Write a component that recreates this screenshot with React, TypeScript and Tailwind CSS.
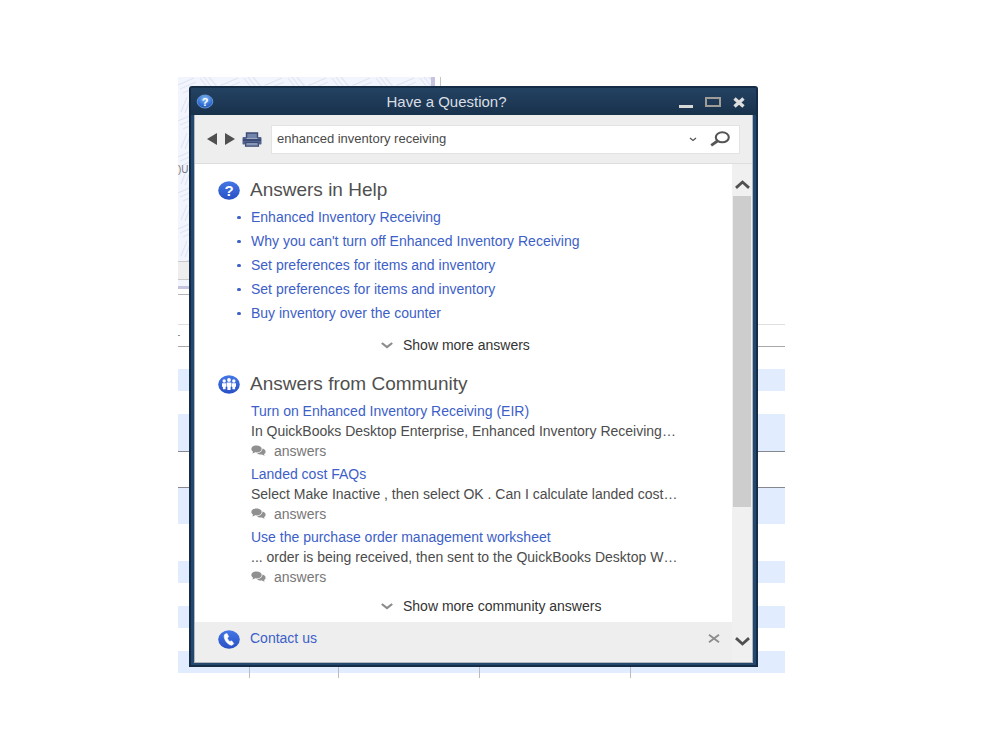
import React from "react";

const helpLinks = [
  "Enhanced Inventory Receiving",
  "Why you can't turn off Enhanced Inventory Receiving",
  "Set preferences for items and inventory",
  "Set preferences for items and inventory",
  "Buy inventory over the counter",
];

const communityPosts = [
  {
    title: "Turn on Enhanced Inventory Receiving (EIR)",
    excerpt: "In QuickBooks Desktop Enterprise, Enhanced Inventory Receiving…",
  },
  {
    title: "Landed cost FAQs",
    excerpt: "Select Make Inactive , then select OK . Can I calculate landed cost…",
  },
  {
    title: "Use the purchase order management worksheet",
    excerpt: "... order is being received, then sent to the QuickBooks Desktop W…",
  },
];

function Badge({ children }: { children: React.ReactNode }) {
  return (
    <svg className="h-5 w-[22px] shrink-0" viewBox="0 0 22 20" aria-hidden="true">
      <defs>
        <linearGradient id="badge" x1="0" y1="0" x2="0" y2="1">
          <stop offset="0" stopColor="#4377e6" />
          <stop offset="1" stopColor="#2850c4" />
        </linearGradient>
      </defs>
      <ellipse cx="11" cy="10.5" rx="10.8" ry="9.2" fill="url(#badge)" />
      {children}
    </svg>
  );
}

function Chevron({ className, d = "M.8 1 6 5.2 11.2 1" }: { className: string; d?: string }) {
  return (
    <svg className={className} viewBox="0 0 12 7" fill="none" stroke="currentColor" strokeWidth="2.200" aria-hidden="true">
      <path d={d} />
    </svg>
  );
}

function AnswersIcon() {
  return (
    <svg className="h-[11px] w-[15px]" viewBox="0 0 15 11" fill="#909090" aria-hidden="true">
      <path d="M5.5.5C2.5.5.3 2 .3 4c0 1.200.8 2.200 1.900 2.800L1.200 8.400c1.200 0 2.200-.4 2.900-1.100.5.1.9.1 1.400.1 3 0 5.200-1.500 5.200-3.500S8.500.5 5.500.5Z" />
      <path d="M11.500 3.600c0 2.600-2.400 4.400-5.500 4.600.8.9 2.200 1.400 3.700 1.400.5 0 .9 0 1.300-.1.700.7 1.700 1.100 2.800 1.100l-.9-1.500c1-.5 1.700-1.400 1.700-2.400 0-1.400-1.200-2.600-3.100-3.100Z" />
    </svg>
  );
}

function Stripe({ className }: { className: string }) {
  return <div className={"shrink-0 bg-[#e1edfe] " + className} />;
}

function Backdrop() {
  return (
    <div className="col-start-1 row-start-1 flex flex-col overflow-hidden" aria-hidden="true">
      <div className="flex h-[184px] shrink-0">
        <div className="relative w-[253px] bg-[#f2f5fd]">
          <svg className="absolute inset-0 h-full w-full" fill="none" stroke="#e0e5f2" strokeWidth="1.2">
            <defs>
              <pattern id="strokes" width="44" height="36" patternUnits="userSpaceOnUse">
                <path d="M0 8 16 1M2 12 18 5M5 16l15-7M22 1l10 13M26 0l10 13M31 0l9 11M3 35 9 20M7 36l6-15M12 36l5-14M20 22l19 6M20 27l18 6M22 32l12 4M38 16l6-9M41 19l3-5" />
              </pattern>
            </defs>
            <rect width="100%" height="100%" fill="url(#strokes)" stroke="none" />
          </svg>
          <div className="relative pt-[85px] text-[10px] leading-4 text-[#777777]">)U</div>
        </div>
        <div className="w-1 bg-[#c5c3df]" />
        <div className="ml-[5px] w-px bg-[#c4c4c4]" />
      </div>
      <div className="h-[19px] w-[262px] shrink-0 border-y border-[#c8c8c8] bg-[#eeeeee]" />
      <div className="h-[6px] w-[262px] shrink-0 bg-[#f2f5fd]" />
      <div className="h-[3px] w-[262px] shrink-0 bg-[#c5c3df]" />
      <div className="h-[6px] w-[262px] shrink-0 border-b border-[#b5b5b5]" />
      <div className="h-[29px] shrink-0" />
      <div className="h-[23px] shrink-0 border-b border-t border-b-[#a8a8a8] border-t-[#dedede] pt-[10px]">
        <div className="h-px w-0.5 bg-[#8896a4]" />
      </div>
      <div className="h-[22px] shrink-0" />
      <Stripe className="h-[22px]" />
      <div className="h-[23px] shrink-0" />
      <Stripe className="h-[38px] border-b border-[#85888e]" />
      <div className="h-9 shrink-0 border-b border-[#85888e]" />
      <Stripe className="h-9" />
      <div className="h-[37px] shrink-0" />
      <Stripe className="h-[22px]" />
      <div className="h-[23px] shrink-0" />
      <Stripe className="h-[22px]" />
      <div className="h-[23px] shrink-0" />
      <div className="relative h-[27px] shrink-0">
        <Stripe className="h-[22px]" />
        <div className="absolute inset-0 flex">
          <div className="w-[72px] border-r border-[#b8bbc0]" />
          <div className="w-[89px] border-r border-[#b8bbc0]" />
          <div className="w-[141px] border-r border-[#b8bbc0]" />
          <div className="w-[151px] border-r border-[#b8bbc0]" />
        </div>
      </div>
    </div>
  );
}

function TitleBar() {
  return (
    <header className="flex h-[27px] items-center bg-linear-to-b from-[#234262] to-[#19324c] pl-[5px] pr-[11px]">
      <svg className="h-[15px] w-[18px]" viewBox="0 0 18 15" aria-hidden="true">
        <defs>
          <radialGradient id="orb" cx=".5" cy=".3" r=".7">
            <stop offset="0" stopColor="#8dc0f5" />
            <stop offset=".6" stopColor="#3a78d8" />
            <stop offset="1" stopColor="#2153b4" />
          </radialGradient>
        </defs>
        <ellipse cx="9" cy="7.500" rx="7.800" ry="6.500" fill="url(#orb)" stroke="#72a8ea" strokeWidth=".8" />
        <text x="9" y="11.500" textAnchor="middle" fontFamily="Liberation Sans, sans-serif" fontWeight="700" fontSize="11" fill="#fff">?</text>
      </svg>
      <h1 className="flex-1 text-center text-[15px] leading-5 text-[#d9dee4]">Have a Question?</h1>
      <div className="flex items-center gap-3">
        <button type="button" aria-label="Minimize" className="flex h-4 w-[14px] items-end pb-[2px]">
          <span className="h-[3px] w-full bg-[#d8d8d8]" />
        </button>
        <button type="button" aria-label="Maximize" className="h-[10px] w-4 border-2 border-[#a09c98]" />
        <button type="button" aria-label="Close" className="h-4 w-3">
          <svg className="h-4 w-3" viewBox="0 0 12 16" stroke="#dedede" strokeWidth="3.400" aria-hidden="true">
            <path d="m1.500 4.500 9 8m0-8-9 8" />
          </svg>
        </button>
      </div>
    </header>
  );
}

function Toolbar() {
  return (
    <div className="flex h-[49px] items-center border-b border-[#dddddd] bg-[#eeeeee] pl-3 pr-3">
      <button type="button" aria-label="Back">
        <svg className="h-3 w-[10px]" viewBox="0 0 10 12" fill="#505050" aria-hidden="true"><path d="M10 0v12L0 6Z" /></svg>
      </button>
      <button type="button" aria-label="Forward" className="ml-2">
        <svg className="h-3 w-[10px]" viewBox="0 0 10 12" fill="#505050" aria-hidden="true"><path d="M0 0v12l10-6Z" /></svg>
      </button>
      <button type="button" aria-label="Print" className="ml-[7px]">
        <svg className="h-[15px] w-5" viewBox="0 0 20 15" aria-hidden="true">
          <path d="M4.500 6V1h11v5" fill="#7283ac" stroke="#3c4b72" strokeWidth="1.400" />
          <path d="M1.500 5h3v1.500h11V5h3c.6 0 1 .5 1 1v5.500c0 .6-.4 1-1 1h-17c-.6 0-1-.4-1-1V6c0-.5.4-1 1-1Z" fill="#52628e" />
          <path d="M1 8h18" stroke="#34426a" strokeWidth="1.400" />
          <path d="M4 10.500h12l.5 3.700h-13Z" fill="#8997b9" stroke="#3c4b72" strokeWidth="1.200" />
        </svg>
      </button>
      <form className="ml-[9px] flex h-[29px] flex-1 items-center border border-[#e3e3e3] bg-white pl-[5px] pr-[9px]" onSubmit={(e) => e.preventDefault()}>
        <input
          type="text"
          aria-label="Search help"
          defaultValue="enhanced inventory receiving"
          className="min-w-0 flex-1 bg-transparent text-[13px] leading-5 text-[#4a4a4a] outline-none"
        />
        <button type="button" aria-label="Recent searches" className="text-[#555555]">
          <svg className="h-[5px] w-2" viewBox="0 0 8 5" fill="none" stroke="currentColor" strokeWidth="1.300" aria-hidden="true"><path d="m1 1 3 2.500L7 1" /></svg>
        </button>
        <button type="submit" aria-label="Search" className="ml-[13px]">
          <svg className="h-4 w-5" viewBox="0 0 20 16" fill="none" stroke="#555555" aria-hidden="true">
            <ellipse cx="12.300" cy="6.300" rx="6.500" ry="5" strokeWidth="2.100" />
            <path d="M7.500 10 1.200 14.300" strokeWidth="2.800" />
          </svg>
        </button>
      </form>
    </div>
  );
}

function ShowMore({ label, className }: { label: string; className: string }) {
  return (
    <button type="button" className={"flex items-center gap-[10px] pl-[163px] text-[14px] leading-5 text-[#333333] " + className}>
      <Chevron className="h-[7px] w-3 text-[#8c8c8c]" />
      {label}
    </button>
  );
}

function Results() {
  return (
    <div className="pl-[23px]">
      <section>
        <div className="flex items-center gap-[10px] pt-[10px]">
          <Badge>
            <text x="11" y="15.800" textAnchor="middle" fontFamily="Liberation Sans, sans-serif" fontWeight="700" fontSize="15" fill="#fff">?</text>
          </Badge>
          <h2 className="text-[19px] leading-8 text-[#505050]">Answers in Help</h2>
        </div>
        <ul className="-mt-px">
          {helpLinks.map((text, i) => (
            <li key={i} className="flex h-6 items-center pl-[19px]">
              <span className="mr-[10px] h-[3px] w-[4px] rounded-full bg-[#3c60c8]" />
              <a href="#" className="text-[14px] leading-6 text-[#3c60c8]">{text}</a>
            </li>
          ))}
        </ul>
        <ShowMore label="Show more answers" className="h-10" />
      </section>
      <section>
        <div className="flex items-center gap-[10px] pt-[3px]">
          <Badge>
            <g fill="#fff">
              <circle cx="6.200" cy="7" r="1.700" />
              <circle cx="11" cy="6" r="1.900" />
              <circle cx="15.800" cy="7" r="1.700" />
              <path d="M4 9.200h4.200v3.600h-.6v2.400H4.900v-2.400H4ZM8.700 8.500h4.600v4.300h-.7v3.200H9.400v-3.200h-.7ZM13.800 9.200H18v3.600h-.9v2.400h-2.700v-2.400h-.6Z" />
            </g>
          </Badge>
          <h2 className="text-[19px] leading-8 text-[#505050]">Answers from Community</h2>
        </div>
        <div className="pl-8 pt-px text-[14px] leading-5">
          {communityPosts.map((post) => (
            <article key={post.title} className="pb-1 pl-px">
              <a href="#" className="block text-[#3c60c8]">{post.title}</a>
              <p className="whitespace-nowrap text-[#4c4c4c]">{post.excerpt}</p>
              <div className="flex h-[19px] items-center gap-2 text-[#777777]">
                <AnswersIcon />
                answers
              </div>
            </article>
          ))}
        </div>
        <ShowMore label="Show more community answers" className="h-8" />
      </section>
    </div>
  );
}

function ContactBar() {
  return (
    <footer className="flex h-10 items-start bg-[#eeeeee] pl-[23px] pr-3 pt-[6px]">
      <div className="flex flex-1 gap-[10px]">
        <div className="pt-px">
          <Badge>
            <path d="M7.200 5 9 4.400l1.700 3.300-1.400 1.300c.4 1.500 1.300 2.700 2.600 3.500l1.800-.7 2.100 2.800-1.400 1.500c-.8.400-2 .2-3.200-.6-2.900-1.700-4.900-4.800-5.100-7.900 0-1.200.4-2.200 1.100-2.600Z" fill="#fff" stroke="#fff" strokeWidth=".5" />
          </Badge>
        </div>
        <a href="#" className="text-[14px] leading-5 text-[#3c60c8]">Contact us</a>
      </div>
      <button type="button" aria-label="Dismiss" className="flex h-5 items-center">
        <svg className="h-[9px] w-3" viewBox="0 0 12 9" stroke="#8c8c8c" strokeWidth="1.800" aria-hidden="true">
          <path d="m1 .8 10 7.400M11 .8 1 8.200" />
        </svg>
      </button>
    </footer>
  );
}

function Scrollbar() {
  return (
    <div className="flex w-5 shrink-0 flex-col items-center bg-[#f0f0f0] pb-4 pt-4">
      <button type="button" aria-label="Scroll up" className="text-[#505050]">
        <Chevron className="block h-[9px] w-[15px]" d="M.8 6.200 6 1.500 11.200 6.200" />
      </button>
      <div className="mt-[7px] h-[311px] w-[18px] bg-[#cdcdcd]" />
      <div className="flex-1" />
      <button type="button" aria-label="Scroll down" className="text-[#505050]">
        <Chevron className="block h-[9px] w-[15px]" d="M.8.8 6 5.500 11.200.8" />
      </button>
    </div>
  );
}

export default function App() {
  return (
    <main className="grid min-h-screen content-start bg-white pb-8 pl-[178px] pr-[214px] pt-[77px] font-['Liberation_Sans',Arial,sans-serif]">
      <Backdrop />
      <div className="relative col-start-1 row-start-1 ml-[11px] mr-[27px] mt-[9px] self-start rounded-t-[3px] border-2 border-[#142c45] bg-[#22486f]">
        <TitleBar />
        <div className="mx-[3px] mb-[2px] border border-t-0 border-[#b4b8bc] bg-white">
          <Toolbar />
          <div className="flex">
            <div className="min-w-0 flex-1">
              <Results />
              <ContactBar />
            </div>
            <Scrollbar />
          </div>
        </div>
      </div>
    </main>
  );
}
